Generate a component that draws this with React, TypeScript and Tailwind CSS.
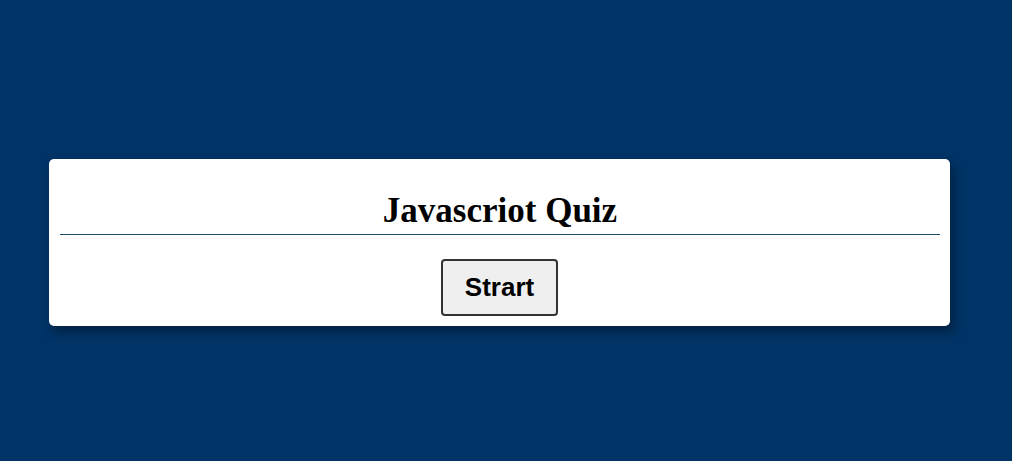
import React from 'react';

export default function App() {
  return (
    <div className="min-h-[461px] w-full bg-[#003366] pt-[159px]">
      <div className="ml-[49px] w-[901px] rounded-[5px] bg-white pt-[32px] pb-[10px] px-[11px] shadow-[4px_6px_10px_rgba(0,0,0,0.35)]">
        <h1 className="text-center text-[35px] leading-[40px] font-bold text-black border-b border-[#1f4d6e] pb-[3px] mr-[-1px]" style={{ fontFamily: '"Liberation Serif", "Times New Roman", serif' }}>
          Javascriot Quiz
        </h1>
        <div className="flex justify-center pt-[24px]">
          <button
            className="h-[57px] w-[117px] rounded-[4px] border-2 border-[#333333] bg-[#efefef] text-[26px] font-bold text-black"
            style={{ fontFamily: '"Liberation Sans", Arial, sans-serif' }}
          >
            Strart
          </button>
        </div>
      </div>
    </div>
  );
}
